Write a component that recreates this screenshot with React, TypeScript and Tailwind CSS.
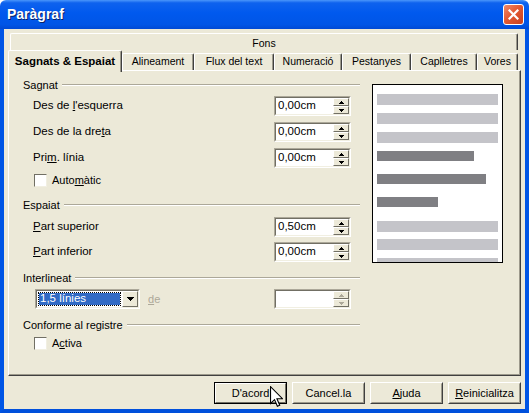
import React from "react";

function Tri({ dir, color = "#000", w = 5, h = 3 }: { dir: "up" | "down"; color?: string; w?: number; h?: number }) {
  return (
    <svg width={w} height={h} viewBox={`0 0 ${w} ${h}`} shapeRendering="crispEdges">
      {dir === "up" ? (
        <path d={`M${w / 2} 0L${w} ${h}H0z`} fill={color} />
      ) : (
        <path d={`M0 0H${w}L${w / 2} ${h}z`} fill={color} />
      )}
    </svg>
  );
}

function SpinBtn({ dir, disabled }: { dir: "up" | "down"; disabled?: boolean }) {
  return (
    <div className="flex-1 flex items-center justify-center bg-[#ece9d8] border border-t-white border-l-white border-b-[#716f64] border-r-[#716f64]">
      <Tri dir={dir} color={disabled ? "#aca899" : "#000"} />
    </div>
  );
}

function Spin({ value, disabled }: { value?: string; disabled?: boolean }) {
  return (
    <div className="w-[77px] h-[20px] flex border border-t-[#aca899] border-l-[#aca899] border-b-white border-r-white">
      <div className="flex-1 flex border border-t-[#716f64] border-l-[#716f64] border-b-[#f1efe2] border-r-[#f1efe2] bg-white">
        <div className="flex-1 flex items-center pl-[2px] text-black leading-none text-[11.5px]">{value}</div>
        <div className="w-[16px] flex flex-col">
          <SpinBtn dir="up" disabled={disabled} />
          <SpinBtn dir="down" disabled={disabled} />
        </div>
      </div>
    </div>
  );
}

function Heading({ children }: { children: React.ReactNode }) {
  return (
    <div className="flex items-center h-[14px]">
      <span className="whitespace-nowrap">{children}</span>
      <div className="ml-[4px] flex-1 h-[2px] border-t border-t-[#aca899] border-b border-b-white" />
    </div>
  );
}

function Row({ label, value }: { label: React.ReactNode; value: string }) {
  return (
    <div className="flex items-center justify-between h-[20px] pl-[10px] pr-[9px]">
      <span className="text-[11.5px]">{label}</span>
      <Spin value={value} />
    </div>
  );
}

function Check({ label }: { label: React.ReactNode }) {
  return (
    <div className="flex items-center h-[13px] pl-[11px]">
      <div className="w-[13px] h-[13px] bg-white border border-t-[#716f64] border-l-[#716f64] border-b-[#f1efe2] border-r-[#f1efe2]" />
      <span className="ml-[5px]">{label}</span>
    </div>
  );
}

function Btn({ children, def }: { children: React.ReactNode; def?: boolean }) {
  return (
    <div
      className={
        "w-[73px] h-[22px] flex " +
        (def ? "border border-black" : "border border-t-white border-l-white border-b-[#404040] border-r-[#404040]")
      }
    >
      <div
        className={
          "flex-1 flex items-center justify-center bg-[#ece9d8] " +
          (def
            ? "border border-t-white border-l-white border-b-[#716f64] border-r-[#716f64]"
            : "border border-t-[#ece9d8] border-l-[#ece9d8] border-b-[#9d9a8c] border-r-[#9d9a8c]")
        }
      >
        {children}
      </div>
    </div>
  );
}

function Tab({ w, children }: { w: number; children: React.ReactNode }) {
  return (
    <div
      style={{ width: w }}
      className="h-[17px] flex items-center justify-center bg-[#ece9d8] border-t border-l border-t-white border-l-white border-r border-r-[#404040] shadow-[inset_-1px_0_0_#9d9a8c] rounded-t-[2px] whitespace-nowrap text-[10.5px]"
    >
      {children}
    </div>
  );
}

function Bar({ w, dark, mt }: { w: number; dark?: boolean; mt: string }) {
  return (
    <div
      style={{ width: w }}
      className={(dark ? "h-[10px] bg-[#7f7f83] " : "h-[11px] bg-[#c4c4c9] ") + mt + " shrink-0"}
    />
  );
}

export default function App() {
  return (
    <div className="relative w-[529px] h-[413px] flex flex-col overflow-hidden bg-white font-['Liberation_Sans',Arial,sans-serif] text-[11px] text-black">
      {/* Title bar */}
      <div className="h-[29px] shrink-0 flex items-center justify-between pl-[7px] pr-[5px] rounded-t-[6px] bg-[linear-gradient(to_bottom,#4a96fb_0%,#0e62ee_10%,#0059ee_45%,#0055e6_85%,#0049d4_100%)]">
        <span className="text-white font-bold text-[14px] [text-shadow:1px_1px_0_#0a246a]">Paràgraf</span>
        <div className="w-[21px] h-[21px] rounded-[3px] border border-white bg-[linear-gradient(135deg,#f08a6a_0%,#e35a33_45%,#c9401f_100%)] flex items-center justify-center">
          <svg width="11" height="11" viewBox="0 0 11 11">
            <path d="M1.5 1.5L9.5 9.5M9.5 1.5L1.5 9.5" stroke="#fff" strokeWidth="2.2" strokeLinecap="square" />
          </svg>
        </div>
      </div>

      {/* Body */}
      <div className="flex-1 flex flex-col bg-[#ece9d8] border-l-4 border-r-4 border-b-4 border-l-[#0055e5] border-r-[#0055e5] border-b-[#0050dc] pt-[4px]">
        {/* back tab row */}
        <div className="ml-[6px] w-[508px] h-[17px] shrink-0 flex justify-center pt-[4px] border-t border-l border-t-white border-l-white border-r border-r-[#404040] shadow-[inset_-1px_0_0_#9d9a8c] rounded-t-[2px] leading-none text-[10.5px]">
          <span>Fons</span>
        </div>
        {/* front tab row */}
        <div className="ml-[4px] h-[20px] shrink-0 flex items-end">
          <div className="relative z-10 w-[114px] h-[22px] mb-[-2px] flex items-center justify-center bg-[#ece9d8] border-t border-l border-t-white border-l-white border-r border-r-[#404040] shadow-[inset_-1px_0_0_#9d9a8c] rounded-t-[2px] font-bold whitespace-nowrap text-[11.5px]">
            Sagnats &amp; Espaiat
          </div>
          <Tab w={72}>Alineament</Tab>
          <Tab w={80}>Flux del text</Tab>
          <Tab w={68}>Numeració</Tab>
          <Tab w={69}>Pestanyes</Tab>
          <Tab w={66}>Caplletres</Tab>
          <Tab w={41}>Vores</Tab>
        </div>

        {/* Panel */}
        <div className="mx-[4px] h-[306px] shrink-0 flex border border-t-white border-l-white border-b-[#404040] border-r-[#404040] shadow-[inset_-1px_-1px_0_#9d9a8c]">
          {/* left column */}
          <div className="ml-[14px] w-[337px] flex flex-col pt-[7px]">
            <Heading>Sagnat</Heading>
            <div className="mt-[4px]">
              <Row label={<>Des de <u className="underline">l</u>'esquerra</>} value="0,00cm" />
            </div>
            <div className="mt-[6px]">
              <Row label={<>Des de la dre<u className="underline">t</u>a</>} value="0,00cm" />
            </div>
            <div className="mt-[6px]">
              <Row label={<>Pri<u className="underline">m</u>. línia</>} value="0,00cm" />
            </div>
            <div className="mt-[6px]">
              <Check label={<>Auto<u className="underline">m</u>àtic</>} />
            </div>
            <div className="mt-[11px]">
              <Heading>Espaiat</Heading>
            </div>
            <div className="mt-[5px]">
              <Row label={<><u className="underline">P</u>art superior</>} value="0,50cm" />
            </div>
            <div className="mt-[5px]">
              <Row label={<><u className="underline">P</u>art inferior</>} value="0,00cm" />
            </div>
            <div className="mt-[9px]">
              <Heading>Interlineat</Heading>
            </div>
            <div className="mt-[4px] h-[20px] flex items-center pl-[12px] pr-[9px]">
              <div className="w-[105px] h-[20px] flex border border-t-[#aca899] border-l-[#aca899] border-b-white border-r-white">
                <div className="flex-1 flex border border-t-[#716f64] border-l-[#716f64] border-b-[#f1efe2] border-r-[#f1efe2] bg-white p-[1px]">
                  <div className="flex-1 flex items-center pl-[1px] bg-[#316ac5] bg-clip-padding border border-dotted border-black text-white text-[11.5px]">
                    1,5 línies
                  </div>
                  <div className="w-[16px] ml-[1px] -my-[1px] -mr-[1px] flex items-center justify-center bg-[#ece9d8] border border-t-white border-l-white border-b-[#716f64] border-r-[#716f64]">
                    <Tri dir="down" w={7} h={4} />
                  </div>
                </div>
              </div>
              <span className="ml-[8px] text-[#aca899]">
                <u className="underline">d</u>e
              </span>
              <div className="ml-auto">
                <Spin disabled />
              </div>
            </div>
            <div className="mt-[9px]">
              <Heading>Conforme al registre</Heading>
            </div>
            <div className="mt-[5px]">
              <Check label={<>A<u className="underline">c</u>tiva</>} />
            </div>
          </div>

          {/* preview */}
          <div className="ml-[12px] mt-[13px] w-[131px] h-[179px] shrink-0 bg-white border border-black overflow-hidden flex flex-col pl-[4px]">
            <Bar w={121} mt="mt-[9px]" />
            <Bar w={121} mt="mt-[8px]" />
            <Bar w={121} mt="mt-[8px]" />
            <Bar w={97} dark mt="mt-[8px]" />
            <Bar w={109} dark mt="mt-[13px]" />
            <Bar w={61} dark mt="mt-[13px]" />
            <Bar w={121} mt="mt-[14px]" />
            <Bar w={121} mt="mt-[7px]" />
            <Bar w={121} mt="mt-[8px]" />
          </div>
        </div>

        {/* Buttons */}
        <div className="mt-[6px] mr-[4px] flex justify-end gap-[5px] text-[11px]">
          <Btn def>D'acord</Btn>
          <Btn>Cancel.la</Btn>
          <Btn>
            <span>
              <u className="underline">A</u>juda
            </span>
          </Btn>
          <Btn>
            <span>
              <u className="underline">R</u>einicialitza
            </span>
          </Btn>
        </div>
      </div>

      {/* mouse cursor */}
      <svg className="absolute left-[270px] top-[386px]" width="13" height="22" viewBox="0 0 12 20">
        <path d="M0.5 0.5V16L4.2 12.4L6.8 18.5L9 17.6L6.4 11.6H11.5Z" fill="#fff" stroke="#000" strokeWidth="1" strokeLinejoin="miter" />
      </svg>
    </div>
  );
}
